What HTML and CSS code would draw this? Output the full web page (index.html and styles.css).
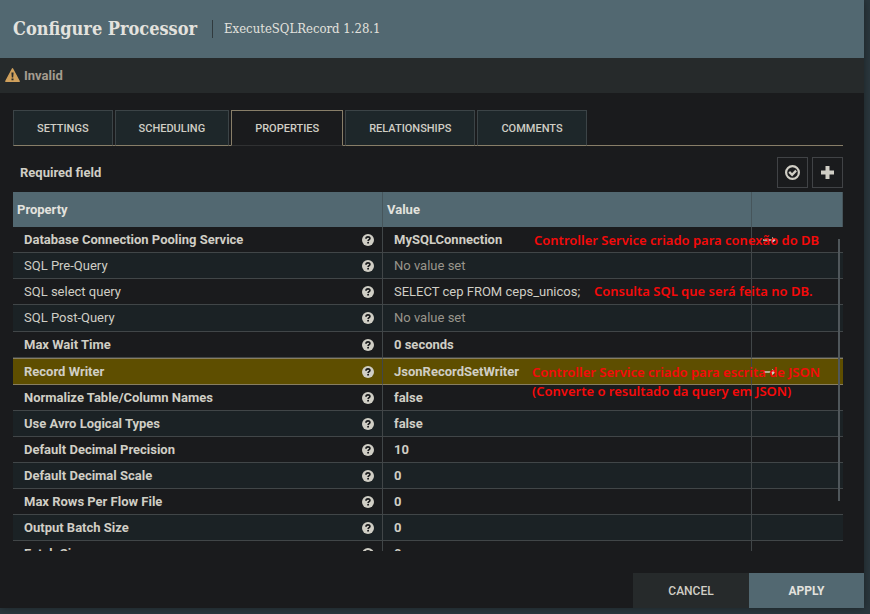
FILE: index.html
```
<!DOCTYPE html>
<html lang="en">
<head>
<meta charset="utf-8">
<title>Configure Processor</title>
<link rel="stylesheet" href="styles.css">
</head>
<body>
<svg class="defs" aria-hidden="true">
  <symbol id="help" viewBox="0 0 12 12"><circle cx="6" cy="6" r="6" fill="#d0cec5"/><path d="M4 4.7C4 2.2 8.1 2.3 7.9 4.5C7.8 5.7 6.2 5.7 6.1 7.1" fill="none" stroke="#1a1b1d" stroke-width="1.7"/><path d="M5.2 8h1.8v1.6H5.2z" fill="#1a1b1d"/></symbol>
  <symbol id="arrow" viewBox="0 0 13 6"><path d="M0 2.200h9V0l4 3-4 3V3.800H0z" fill="#d0cec5"/></symbol>
</svg>
<main class="dialog">
  <header class="head"><h1>Configure Processor</h1><span class="type">ExecuteSQLRecord 1.28.1</span></header>
  <div class="status">
    <svg width="15" height="14" viewBox="0 0 15 14"><path d="M7.5 0.800L14.200 13.300H0.800z" fill="#cfa05c" stroke="#cfa05c" stroke-width="1.400" stroke-linejoin="round"/><path d="M6.4 4.6h2.2L8.2 9.4H6.8zM6.5 10.5h2v1.7h-2z" fill="#262a2b"/></svg>
    <span>Invalid</span>
  </div>
  <div class="content">
    <nav class="tabs" role="tablist">
      <button role="tab">SETTINGS</button>
      <button role="tab">SCHEDULING</button>
      <button role="tab" class="selected" aria-selected="true">PROPERTIES</button>
      <button role="tab">RELATIONSHIPS</button>
      <button role="tab">COMMENTS</button>
    </nav>
    <div class="toolbar">
      <span class="required">Required field</span>
      <button aria-label="Verify properties"><svg width="15" height="15" viewBox="0 0 15 15" fill="none" stroke="#d0cec5"><circle cx="7.5" cy="7.5" r="6.400" stroke-width="2.200"/><path d="M4.2 6.900l2.900 2.900 4-4.2" stroke-width="2.300"/></svg></button>
      <button aria-label="Add property"><svg width="15" height="15" viewBox="0 0 15 15"><path d="M5.500 1h4v4.500H14v4H9.500V14h-4V9.500H1v-4h4.500z" fill="#d0cec5"/></svg></button>
    </div>
    <div class="viewport">
      <table>
        <colgroup><col class="property"><col class="value"><col></colgroup>
        <thead><tr><th>Property</th><th>Value</th><th></th></tr></thead>
        <tbody>
          <tr><td><div class="name">Database Connection Pooling Service<svg><use href="#help"/></svg></div></td><td>MySQLConnection</td><td><svg class="go"><use href="#arrow"/></svg></td></tr>
          <tr class="optional unset"><td><div class="name">SQL Pre-Query<svg><use href="#help"/></svg></div></td><td>No value set</td><td></td></tr>
          <tr class="optional"><td><div class="name">SQL select query<svg><use href="#help"/></svg></div></td><td>SELECT cep FROM ceps_unicos;</td><td></td></tr>
          <tr class="optional unset"><td><div class="name">SQL Post-Query<svg><use href="#help"/></svg></div></td><td>No value set</td><td></td></tr>
          <tr><td><div class="name">Max Wait Time<svg><use href="#help"/></svg></div></td><td>0 seconds</td><td></td></tr>
          <tr class="active"><td><div class="name">Record Writer<svg><use href="#help"/></svg></div></td><td>JsonRecordSetWriter</td><td><svg class="go"><use href="#arrow"/></svg></td></tr>
          <tr><td><div class="name">Normalize Table/Column Names<svg><use href="#help"/></svg></div></td><td>false</td><td></td></tr>
          <tr><td><div class="name">Use Avro Logical Types<svg><use href="#help"/></svg></div></td><td>false</td><td></td></tr>
          <tr><td><div class="name">Default Decimal Precision<svg><use href="#help"/></svg></div></td><td>10</td><td></td></tr>
          <tr><td><div class="name">Default Decimal Scale<svg><use href="#help"/></svg></div></td><td>0</td><td></td></tr>
          <tr><td><div class="name">Max Rows Per Flow File<svg><use href="#help"/></svg></div></td><td>0</td><td></td></tr>
          <tr><td><div class="name">Output Batch Size<svg><use href="#help"/></svg></div></td><td>0</td><td></td></tr>
          <tr><td><div class="name">Fetch Size<svg><use href="#help"/></svg></div></td><td>0</td><td></td></tr>
        </tbody>
      </table>
      <div class="scrollbar"></div>
    </div>
  </div>
  <footer class="actions-bar"><button>CANCEL</button><button class="primary">APPLY</button></footer>
  <p class="note note-db">Controller Service criado para conexão do DB</p>
  <p class="note note-query">Consulta SQL que será feita no DB.</p>
  <p class="note note-json">Controller Service criado para escrita de JSON<br>(Converte o resultado da query em JSON)</p>
</main>
</body>
</html>
```
FILE: styles.css
```
* { box-sizing: border-box; }
body {
  margin: 0;
  height: 100vh;
  padding: 0 6px 6px 0;
  overflow: hidden;
  background: #2b383e;
  color: #d0cec5;
  font: 13px/16px Roboto, sans-serif;
}
button { font: inherit; color: inherit; margin: 0; border: 0; }
.defs { position: absolute; width: 0; height: 0; }
.dialog {
  position: relative;
  height: 100%;
  display: flex;
  flex-direction: column;
  background: #1a1b1d;
  box-shadow: 0 0 8px #1a2226;
}
.head {
  height: 58px;
  flex: none;
  display: flex;
  align-items: center;
  padding: 0 13px;
  background: #526871;
  color: #e3e2de;
  font-family: "Roboto Slab", "DejaVu Serif Condensed", "DejaVu Serif", serif;
}
h1 { margin: 0 15px 0 0; font-size: 18px; line-height: 24px; font-weight: 700; }
.type { border-left: 1px solid #303a3e; padding-left: 11px; font-size: 13px; line-height: 18px; }
.status {
  height: 35px;
  flex: none;
  display: flex;
  align-items: center;
  gap: 4px;
  padding: 0 5px;
  background: #262a2b;
  color: #a39c90;
  font-weight: 700;
}
.status svg { margin-bottom: 2px; }
.content { flex: 1; min-height: 0; display: flex; flex-direction: column; padding: 17px 21px 22px 13px; }
.tabs { display: flex; gap: 2px; border-bottom: 1px solid #887e68; flex: none; }
.tabs button {
  height: 36px;
  margin-bottom: -1px;
  padding: 2px 23px 0;
  background: #1e272a;
  border: 1px solid #3c4447;
  border-bottom-color: #887e68;
  font-size: 11px;
  font-weight: 500;
}
.tabs .selected { background: #1a1b1d; border-color: #887e68; border-bottom-color: #303132; }
.toolbar { flex: none; display: flex; align-items: center; gap: 4px; padding: 11px 0 4px 7px; }
.required { margin-right: auto; font-weight: 700; }
.toolbar button {
  width: 31px;
  height: 31px;
  padding: 0;
  display: grid;
  place-items: center;
  background: #1a1b1d;
  border: 1px solid #414346;
}
.viewport { position: relative; flex: 1; min-height: 0; overflow: hidden; }
table { width: 100%; table-layout: fixed; border-collapse: separate; border-spacing: 0; }
.property { width: 370px; }
.value { width: 369px; }
th { height: 35px; padding: 0 4px; text-align: left; background: #526871; color: #e3e2de; border-right: 1px solid #46555b; }
td { height: 26px; padding: 0 11px; border-bottom: 1px solid #414648; border-right: 1px solid #414648; font-weight: 700; }
td:last-child { border-right: 0; }
tbody tr:nth-child(even) { background: #1b2225; }
tbody tr:nth-child(4) td { height: 27px; }
.name { display: flex; align-items: center; justify-content: space-between; }
.name svg { width: 12px; height: 12px; margin-right: -3px; }
.optional td { font-weight: 400; }
.unset td:nth-child(2) { color: #99958c; }
tbody tr.active { background: #5e4e00; }
.active td { height: 27px; border-top: 1px solid #887e60; border-bottom-color: #887e60; }
.go { display: block; width: 13px; height: 6px; }
.scrollbar { position: absolute; right: 3px; top: 47px; width: 2px; height: 262px; background: #50575b; }
.actions-bar { flex: none; display: flex; justify-content: flex-end; }
.actions-bar button { width: 116px; height: 35px; background: #262a2b; font-size: 12px; font-weight: 500; }
.actions-bar .primary { width: 115px; background: #526871; color: #e3e2de; font-weight: 700; }
.note { position: absolute; margin: 0; color: #f50a0a; font: 600 13px/19px "Noto Sans", sans-serif; white-space: nowrap; }
.note-db { left: 534px; top: 231px; }
.note-query { left: 594px; top: 282px; }
.note-json { left: 532px; top: 363px; }
```
